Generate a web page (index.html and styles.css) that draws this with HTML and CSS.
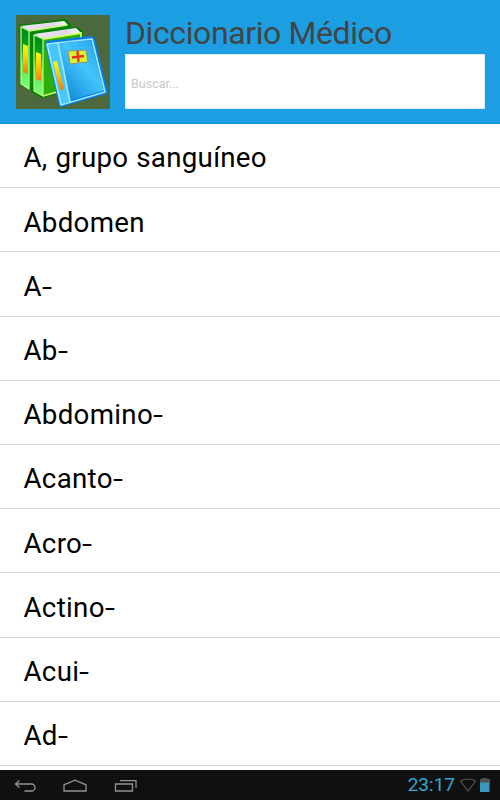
FILE: index.html
```html
<!DOCTYPE html>
<html lang="es">
<head>
<meta charset="utf-8">
<title>Diccionario Médico</title>
<link rel="stylesheet" href="styles.css">
</head>
<body>
<header class="header">
  <svg class="logo" viewBox="0 0 94 94">
    <defs>
      <linearGradient id="cover" x1="0" y1="1" x2="1" y2="0"><stop offset="0" stop-color="#0878cb"/><stop offset=".2" stop-color="#1088d8"/><stop offset=".6" stop-color="#43c4fa"/><stop offset="1" stop-color="#219bee"/></linearGradient>
      <linearGradient id="label" x1="0" y1="0" x2="0" y2="1"><stop offset="0" stop-color="#f7ff00"/><stop offset=".5" stop-color="#ffc400"/><stop offset="1" stop-color="#f17b08"/></linearGradient>
      <linearGradient id="spine" x1="0" y1="0" x2="0" y2="1"><stop offset="0" stop-color="#008719"/><stop offset=".35" stop-color="#08a51c"/><stop offset=".6" stop-color="#5be85b"/><stop offset="1" stop-color="#7bff78"/></linearGradient>
      <linearGradient id="pages" x1="0" y1="0" x2="1" y2="0"><stop offset="0" stop-color="#eee5f7"/><stop offset=".7" stop-color="#e4d7ed"/><stop offset="1" stop-color="#fff"/></linearGradient>
    </defs>
    <path fill="#4c693e" d="M0 0h94v94H0z"/>
    <path d="M4 11 49 5 54 10 52 18 17 25 17 75 5 69Z" fill="#078b0b" stroke="#068000" stroke-width="2.5" stroke-linejoin="round"/>
    <path d="M5 11 48 6 52 10 13 16Z" fill="url(#pages)"/>
    <path d="M5 12 13 16 13 74 5 69Z" fill="url(#spine)" stroke="#b4ff88" stroke-width="1.2"/>
    <path d="M13 16 51 10" stroke="#c9ff6d" stroke-width="1.4"/>
    <path fill="url(#label)" d="m7 29 5 2v28l-5-2z"/>
    <path d="M17 19 61 13 66 17 65 71 26 82 17 77Z" fill="#30ad08" stroke="#058000" stroke-width="2.5" stroke-linejoin="round"/>
    <path d="M18 19 60 13 65 18 27 24Z" fill="url(#pages)"/>
    <path d="M18 20 27 24 27 81 18 76Z" fill="url(#spine)" stroke="#b4ff88" stroke-width="1.2"/>
    <path d="m27 24 38-6v52L27 81" fill="none" stroke="#d0ff6f" stroke-width="1.8"/>
    <path fill="url(#label)" d="m20 37 5 2v27l-5-2z"/>
    <path d="M31 28 75 23 77 25 90 77 45 90Z" fill="url(#cover)" stroke="#087ce9" stroke-width="4" stroke-linejoin="round"/>
    <path d="M31 29 42 27 54 86 45 90Z" fill="#49c6fa"/>
    <path d="M31 29 76 24 89 77 45 90ZM42 28 54 87" fill="none" stroke="#9be9ff" stroke-width="1.7" stroke-linejoin="round"/>
    <path fill="url(#label)" d="m37 47 4-1 7 28-4 1z"/>
    <path fill="#d9f22b" stroke="#7e8e9b" stroke-width="1" d="m52 36 18-1 2 12-18 2z"/>
    <path d="m61.500 36 1 11M56 42.500l12-1.500" stroke="#e33416" stroke-width="2.400"/>
  </svg>
  <div class="heading">
    <h1 class="title">Diccionario Médico</h1>
    <input class="search" type="text" placeholder="Buscar...">
  </div>
</header>
<ul class="list">
  <li class="item">A, grupo sanguíneo</li>
  <li class="item">Abdomen</li>
  <li class="item">A<span class="hyphen">-</span></li>
  <li class="item">Ab<span class="hyphen">-</span></li>
  <li class="item">Abdomino<span class="hyphen">-</span></li>
  <li class="item">Acanto<span class="hyphen">-</span></li>
  <li class="item">Acro<span class="hyphen">-</span></li>
  <li class="item">Actino<span class="hyphen">-</span></li>
  <li class="item">Acui<span class="hyphen">-</span></li>
  <li class="item">Ad<span class="hyphen">-</span></li>
</ul>
<footer class="navbar">
  <svg class="keys" viewBox="0 0 150 30" fill="none" stroke="#929292" stroke-width="1.3">
    <path d="M19.500 10.500 15.500 14l4 3.500M15.500 14H31.500a3.500 3.500 0 0 1 0 7H24.500"/>
    <path d="M64 21v-6.200L75 10.200l11 4.600V21z"/>
    <path d="M115.500 14h17v7h-17zM120 10.700h16v7"/>
  </svg>
  <span class="clock">23:17</span>
  <svg class="status" viewBox="0 0 30 30">
    <path d="M5.500 11q7.500-4 15 0L13 21z" fill="none" stroke="#505050" stroke-width="1.200"/>
    <path fill="#505050" d="M27 8h5v1h3v4H25V9h2z"/>
    <path fill="#3999bd" d="M25 12.500h9.500V22H25z"/>
  </svg>
</footer>
</body>
</html>
```
FILE: styles.css
```css
* { box-sizing: border-box; }
body {
  margin: 0;
  width: 500px;
  height: 800px;
  display: flex;
  flex-direction: column;
  overflow: hidden;
  background: #fff;
  font-family: Roboto, sans-serif;
}
.header {
  flex: none;
  height: 124px;
  padding: 15px 15px 0 15.5px;
  display: flex;
  gap: 15.5px;
  background: #1c9fe2;
  border-bottom: 1px solid #1690d4;
}
.logo { width: 94px; height: 94px; flex: none; }
.heading { flex: 1; }
.title {
  margin: 0;
  height: 39px;
  line-height: 37px;
  font-size: 32px;
  font-weight: 400;
  letter-spacing: -0.4px;
  color: #444;
  white-space: nowrap;
}
.search {
  display: block;
  width: 360px;
  height: 55px;
  padding: 4px 5px 0;
  border: 1px solid #d9effa;
  border-radius: 0;
  background: #fff;
  font: 12.5px Roboto, sans-serif;
  outline: 0;
}
.search::placeholder { color: #c8c8c8; opacity: 1; }
.list {
  flex: 1;
  min-height: 0;
  margin: 0;
  padding: 0;
  list-style: none;
  overflow: hidden;
}
.item {
  height: 64.2px;
  padding: 2.4px 24px 0 23.5px;
  line-height: 64px;
  font-size: 27.7px;
  letter-spacing: 0.3px;
  word-spacing: 0.6px;
  color: #000;
  border-bottom: 1px solid #d6d6d6;
}
.hyphen { display: inline-block; transform: scaleX(1.3); transform-origin: left; }
.navbar {
  flex: none;
  height: 30px;
  display: flex;
  align-items: center;
  background: #101010;
}
.keys { width: 150px; height: 30px; }
.clock { margin-left: auto; font-size: 19px; line-height: 32px; color: #33a6d8; }
.status { width: 30px; height: 30px; margin-right: 15px; overflow: visible; }
```
